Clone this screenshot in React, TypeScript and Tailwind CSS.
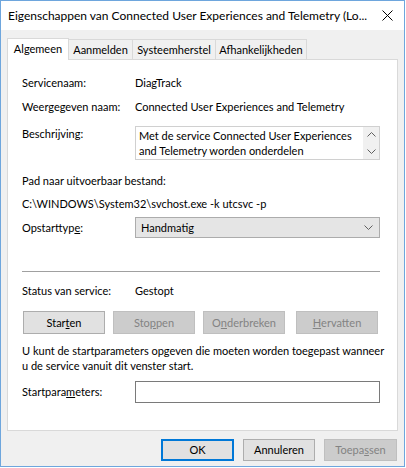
import type { ReactNode } from 'react'

const font = { fontFamily: '"Segoe UI", Lato, "Liberation Sans", sans-serif' }

function Chevron({ up, className }: { up?: boolean; className?: string }) {
  return (
    <svg width="9" height="5" viewBox="0 0 9 5" className={className}>
      <path d={up ? 'M0.5 4.5 L4.5 0.5 L8.5 4.5' : 'M0.5 0.5 L4.5 4.5 L8.5 0.5'} fill="none" stroke="#606060" strokeWidth="1" />
    </svg>
  )
}

function Row({ label, children, className = '' }: { label: ReactNode; children: ReactNode; className?: string }) {
  return (
    <div className={`flex items-center ${className}`}>
      <div className="w-[113px] shrink-0">{label}</div>
      <div className="flex-1">{children}</div>
    </div>
  )
}

function Btn({ children, disabled, className = '' }: { children: ReactNode; disabled?: boolean; className?: string }) {
  return (
    <button
      disabled={disabled}
      className={`flex h-[23px] items-center justify-center border ${
        disabled ? 'border-[#bfbfbf] bg-[#cccccc] text-[#838383]' : 'border-[#adadad] bg-[#e1e1e1] text-black'
      } ${className}`}
    >
      {children}
    </button>
  )
}

export default function App() {
  const tabs = [
    { name: 'Aanmelden', w: 'w-[64px]' },
    { name: 'Systeemherstel', w: 'w-[83px]' },
    { name: 'Afhankelijkheden', w: 'w-[91px]' },
  ]

  return (
    <div style={font} className="flex h-[467px] w-[405px] flex-col border border-[#6ea6dd] bg-[#f0f0f0] text-[11px] leading-[16px] text-black">
      <div className="flex h-[29px] shrink-0 items-center justify-between bg-white pl-[7px] pr-[11px]">
        <span className="whitespace-nowrap text-[12px]">Eigenschappen van Connected User Experiences and Telemetry (Lo...</span>
        <svg width="11" height="11" viewBox="0 0 11 11" className="shrink-0">
          <path d="M0.5 0.5 L10.5 10.5 M10.5 0.5 L0.5 10.5" stroke="#000" strokeWidth="1" />
        </svg>
      </div>

      <div className="flex flex-1 flex-col px-[6px] pt-[7px]">
        <div className="flex h-[22px] items-end">
          <div className="relative z-10 -mb-px flex h-[22px] w-[62px] items-start justify-center border border-b-0 border-[#d9d9d9] bg-white pt-[2px]">
            Algemeen
          </div>
          {tabs.map(t => (
            <div
              key={t.name}
              className={`flex h-[20px] ${t.w} items-center justify-center border border-l-0 border-b-0 border-[#d9d9d9] bg-[#f0f0f0]`}
            >
              {t.name}
            </div>
          ))}
        </div>

        <div className="flex h-[372px] flex-col border border-[#d9d9d9] bg-white pl-[14px] pr-[17px]">
          <Row label="Servicenaam:" className="mt-[15px] h-[16px]">DiagTrack</Row>
          <Row label="Weergegeven naam:" className="mt-[8px] h-[16px]">Connected User Experiences and Telemetry</Row>
          <Row label="Beschrijving:" className="mt-[11px] !items-start">
            <div className="flex h-[34px] border border-[#d0d0d0] bg-white">
              <div className="flex-1 pl-[3px] pt-px leading-[15px]">
                Met de service Connected User Experiences and Telemetry worden onderdelen
              </div>
              <div className="flex w-[16px] flex-col items-center justify-between bg-[#f0f0f0] py-[5px]">
                <Chevron up />
                <Chevron />
              </div>
            </div>
          </Row>
          <div className="mt-[13px] h-[16px]">Pad naar uitvoerbaar bestand:</div>
          <div className="mt-[7px] h-[16px]">C:\WINDOWS\System32\svchost.exe -k utcsvc -p</div>
          <Row
            label={
              <span>
                Opstarttyp<u>e</u>:
              </span>
            }
            className="mt-[5px] h-[21px]"
          >
            <div className="flex h-[21px] items-center justify-between border border-[#acacac] bg-[#e5e5e5] pl-[5px] pr-[6px]">
              <span>Handmatig</span>
              <Chevron />
            </div>
          </Row>

          <div className="mt-[33px] h-px bg-[#a0a0a0]" />

          <Row label="Status van service:" className="mt-[11px] h-[16px]">Gestopt</Row>

          <div className="mt-[12px] flex gap-[8px] pl-px">
            <Btn className="w-[82px]">
              Star<u>t</u>en
            </Btn>
            <Btn disabled className="w-[82px]">
              Sto<u>p</u>pen
            </Btn>
            <Btn disabled className="w-[82px]">
              O<u>n</u>derbreken
            </Btn>
            <Btn disabled className="ml-[3px] w-[82px]">
              <u>H</u>ervatten
            </Btn>
          </div>

          <p className="mt-[9px] whitespace-nowrap leading-[15px]">
            U kunt de startparameters opgeven die moeten worden toegepast wanneer
            <br />
            u de service vanuit dit venster start.
          </p>

          <Row
            label={
              <span>
                Startpara<u>m</u>eters:
              </span>
            }
            className="mt-[8px] h-[22px]"
          >
            <div className="h-[22px] border border-[#7a7a7a] bg-white" />
          </Row>
        </div>

        <div className="mt-[8px] flex justify-end gap-[9px] pr-px">
          <button className="flex h-[22px] w-[73px] items-center justify-center border-2 border-[#0078d7] bg-[#e1e1e1]">OK</button>
          <button className="flex h-[22px] w-[72px] items-center justify-center border border-[#adadad] bg-[#e1e1e1]">
            Annuleren
          </button>
          <button className="flex h-[22px] w-[73px] items-center justify-center border border-[#bfbfbf] bg-[#cccccc] text-[#838383]">
            Toepa<u>s</u>sen
          </button>
        </div>
      </div>
    </div>
  )
}
